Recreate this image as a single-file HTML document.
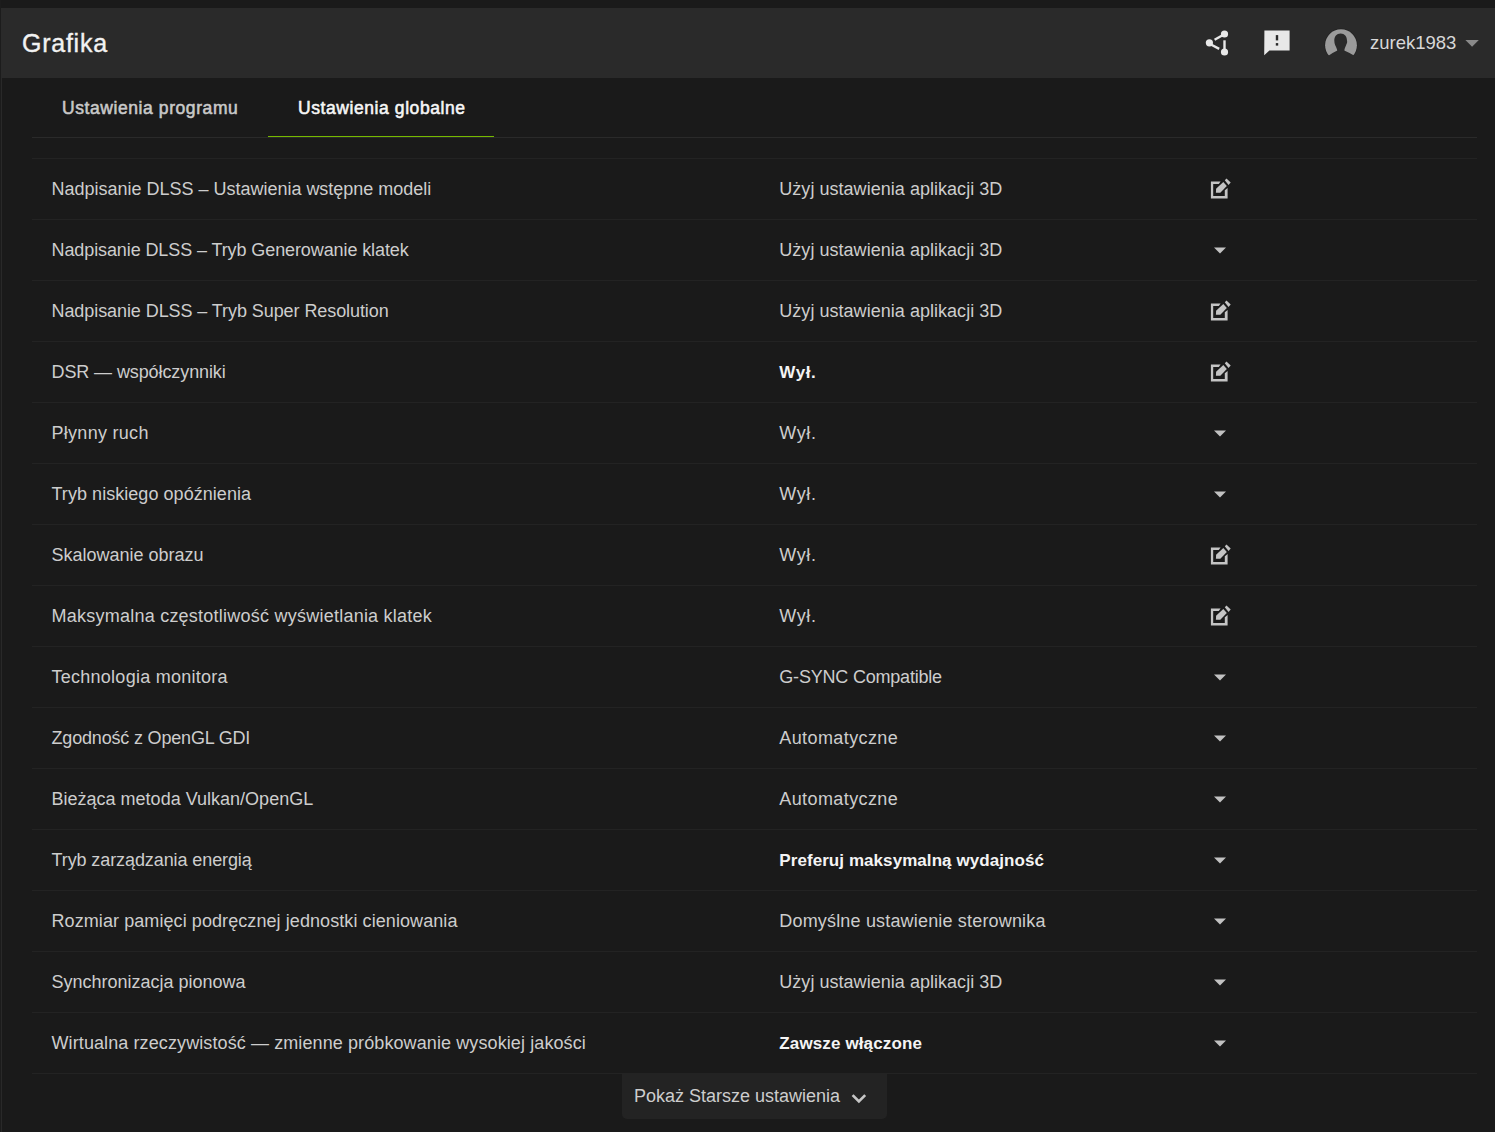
<!DOCTYPE html>
<html><head><meta charset="utf-8">
<style>
html,body{margin:0;padding:0;}
body{width:1495px;height:1132px;overflow:hidden;background:#1a1a1a;position:relative;font-family:"Liberation Sans",sans-serif;}
.abs{position:absolute;}
#top{left:0;top:0;width:1495px;height:8px;background:#1a1a1a;}
#lcol0{left:0;top:0;width:1px;height:1132px;background:#1c1c1c;}
#lcol1{left:1px;top:78px;width:1px;height:1054px;background:#292929;}
#hdr{left:1px;top:8px;width:1494px;height:70px;background:#2a2a2a;}
#title{left:22px;top:27.9px;font-size:25px;letter-spacing:0.75px;font-weight:400;-webkit-text-stroke:0.35px #f2f2f2;color:#f2f2f2;line-height:30px;white-space:nowrap;}
.tab{top:92.6px;font-size:17.5px;font-weight:400;letter-spacing:0.58px;-webkit-text-stroke:0.55px currentColor;line-height:30px;white-space:nowrap;}
.line{left:32px;width:1445px;height:1px;background:#232323;}
.lbl{left:51.5px;font-size:18px;color:#cdcdcd;line-height:61px;white-space:nowrap;}
.val{left:779.3px;font-size:18px;color:#cdcdcd;line-height:61px;white-space:nowrap;}
.val.b{font-weight:700;color:#f4f4f4;font-size:17px;letter-spacing:0.1px;}
.ico{left:1208px;width:24px;height:24px;}
</style></head>
<body>
<div class="abs" id="top"></div>
<div class="abs" id="hdr"></div>
<div class="abs" id="lcol0"></div>
<div class="abs" id="lcol1"></div>
<div class="abs" id="title">Grafika</div>

<!-- header icons -->
<svg class="abs" style="left:1200px;top:24px" width="36" height="38" viewBox="1200 24 36 38">
  <g fill="#e8e8e8" stroke="#e8e8e8">
    <circle cx="1224.5" cy="34" r="3.6" stroke="none"/>
    <circle cx="1209.4" cy="42.8" r="3.6" stroke="none"/>
    <circle cx="1224.5" cy="52" r="3.6" stroke="none"/>
    <line x1="1214.6" y1="39.8" x2="1223" y2="35" stroke-width="2.4"/>
    <line x1="1224.5" y1="40.3" x2="1224.5" y2="50" stroke-width="2.4"/>
    <line x1="1210" y1="44" x2="1219.2" y2="48.9" stroke-width="2.4"/>
  </g>
</svg>
<svg class="abs" style="left:1260px;top:26px" width="34" height="34" viewBox="1260 26 34 34">
  <path fill="#e8e8e8" d="M1264.4 30.4H1289.6V50.5H1269.4L1264.2 55.2Z"/>
  <rect x="1275.8" y="35.1" width="2.4" height="5.3" fill="#2a2a2a"/>
  <rect x="1275.8" y="43.1" width="2.4" height="2.5" fill="#2a2a2a"/>
</svg>
<svg class="abs" style="left:1320px;top:24px" width="42" height="36" viewBox="1320 24 42 36">
  <defs><clipPath id="avc"><path d="M1320 24H1362V55.4H1353.9Q1348.6 52.4 1344.2 50.5H1337.4Q1332.9 52.6 1328.1 55.9H1320Z"/></clipPath></defs>
  <circle cx="1341" cy="45.2" r="16.6" fill="#222" clip-path="url(#avc)"/>
  <circle cx="1341" cy="45.2" r="15.9" fill="#9b9b9b" clip-path="url(#avc)"/>
  <path fill="#2a2a2a" d="M1340.6 33.4C1344.6 33.4 1347 36.4 1347 40.6C1347 41.2 1347.3 41.6 1347.1 42.6C1346.9 43.6 1346.5 44.2 1346 45.4C1345.2 47.2 1344.5 48.2 1344.2 51.5H1337.4C1337.1 48.4 1336 47 1335.2 45.2C1334.6 43.8 1334.3 42.4 1334.3 40.6C1334.3 36.4 1336.6 33.4 1340.6 33.4Z"/>
</svg>
<div class="abs" style="left:1370px;top:27.6px;font-size:18.5px;color:#d8d8d8;line-height:30px;white-space:nowrap;">zurek1983</div>
<svg class="abs" style="left:1464px;top:38px" width="16" height="12" viewBox="1464 38 16 12">
  <path d="M1465.4 39.9H1478.8L1472.1 46.7Z" fill="#8a8a8a"/>
</svg>

<!-- tabs -->
<div class="abs tab" style="left:62px;color:#c9c9c9;">Ustawienia programu</div>
<div class="abs tab" style="left:298px;color:#f6f6f6;">Ustawienia globalne</div>
<div class="abs" style="left:32px;top:137px;width:1445px;height:1px;background:#2a2a2a;"></div>
<div class="abs" style="left:268px;top:136px;width:226px;height:1px;background:#76b900;"></div>

<!--ROWS-->
<div class="abs line" style="top:158px"></div>
<div class="abs lbl" style="top:159px;letter-spacing:-0.009px">Nadpisanie DLSS – Ustawienia wstępne modeli</div>
<div class="abs val" style="top:159px;letter-spacing:0.033px">Użyj ustawienia aplikacji 3D</div>
<svg class="abs" style="left:1206px;top:174px" width="28" height="28" viewBox="0 0 28 28"><g fill="#c4c4c4"><path d="M4.9 7.4H14.6L12.8 10.1H7.2V21.9H18.8V16.3L21.6 13.9V24.4H4.9Z"/><path d="M10.1 14.8L17.3 7.9L20.8 11.9L14.3 18.8H9.9Z"/><path d="M18.8 6.2L20.5 4.5L24.7 8.4L22.5 10.9Z"/></g></svg>
<div class="abs line" style="top:219px"></div>
<div class="abs lbl" style="top:220px;letter-spacing:-0.099px">Nadpisanie DLSS – Tryb Generowanie klatek</div>
<div class="abs val" style="top:220px;letter-spacing:0.033px">Użyj ustawienia aplikacji 3D</div>
<svg class="abs" style="left:1206px;top:235px" width="28" height="28" viewBox="0 0 28 28"><path d="M8 12.4H20L14 18.4Z" fill="#c2c2c2"/></svg>
<div class="abs line" style="top:280px"></div>
<div class="abs lbl" style="top:281px;letter-spacing:-0.078px">Nadpisanie DLSS – Tryb Super Resolution</div>
<div class="abs val" style="top:281px;letter-spacing:0.033px">Użyj ustawienia aplikacji 3D</div>
<svg class="abs" style="left:1206px;top:296px" width="28" height="28" viewBox="0 0 28 28"><g fill="#c4c4c4"><path d="M4.9 7.4H14.6L12.8 10.1H7.2V21.9H18.8V16.3L21.6 13.9V24.4H4.9Z"/><path d="M10.1 14.8L17.3 7.9L20.8 11.9L14.3 18.8H9.9Z"/><path d="M18.8 6.2L20.5 4.5L24.7 8.4L22.5 10.9Z"/></g></svg>
<div class="abs line" style="top:341px"></div>
<div class="abs lbl" style="top:342px;letter-spacing:-0.100px">DSR — współczynniki</div>
<div class="abs val b" style="top:342px;letter-spacing:0.600px">Wył.</div>
<svg class="abs" style="left:1206px;top:357px" width="28" height="28" viewBox="0 0 28 28"><g fill="#c4c4c4"><path d="M4.9 7.4H14.6L12.8 10.1H7.2V21.9H18.8V16.3L21.6 13.9V24.4H4.9Z"/><path d="M10.1 14.8L17.3 7.9L20.8 11.9L14.3 18.8H9.9Z"/><path d="M18.8 6.2L20.5 4.5L24.7 8.4L22.5 10.9Z"/></g></svg>
<div class="abs line" style="top:402px"></div>
<div class="abs lbl" style="top:403px;letter-spacing:0.288px">Płynny ruch</div>
<div class="abs val" style="top:403px;letter-spacing:0.600px">Wył.</div>
<svg class="abs" style="left:1206px;top:418px" width="28" height="28" viewBox="0 0 28 28"><path d="M8 12.4H20L14 18.4Z" fill="#c2c2c2"/></svg>
<div class="abs line" style="top:463px"></div>
<div class="abs lbl" style="top:464px;letter-spacing:0.047px">Tryb niskiego opóźnienia</div>
<div class="abs val" style="top:464px;letter-spacing:0.600px">Wył.</div>
<svg class="abs" style="left:1206px;top:479px" width="28" height="28" viewBox="0 0 28 28"><path d="M8 12.4H20L14 18.4Z" fill="#c2c2c2"/></svg>
<div class="abs line" style="top:524px"></div>
<div class="abs lbl" style="top:525px;letter-spacing:-0.006px">Skalowanie obrazu</div>
<div class="abs val" style="top:525px;letter-spacing:0.600px">Wył.</div>
<svg class="abs" style="left:1206px;top:540px" width="28" height="28" viewBox="0 0 28 28"><g fill="#c4c4c4"><path d="M4.9 7.4H14.6L12.8 10.1H7.2V21.9H18.8V16.3L21.6 13.9V24.4H4.9Z"/><path d="M10.1 14.8L17.3 7.9L20.8 11.9L14.3 18.8H9.9Z"/><path d="M18.8 6.2L20.5 4.5L24.7 8.4L22.5 10.9Z"/></g></svg>
<div class="abs line" style="top:585px"></div>
<div class="abs lbl" style="top:586px;letter-spacing:0.237px">Maksymalna częstotliwość wyświetlania klatek</div>
<div class="abs val" style="top:586px;letter-spacing:0.600px">Wył.</div>
<svg class="abs" style="left:1206px;top:601px" width="28" height="28" viewBox="0 0 28 28"><g fill="#c4c4c4"><path d="M4.9 7.4H14.6L12.8 10.1H7.2V21.9H18.8V16.3L21.6 13.9V24.4H4.9Z"/><path d="M10.1 14.8L17.3 7.9L20.8 11.9L14.3 18.8H9.9Z"/><path d="M18.8 6.2L20.5 4.5L24.7 8.4L22.5 10.9Z"/></g></svg>
<div class="abs line" style="top:646px"></div>
<div class="abs lbl" style="top:647px;letter-spacing:0.261px">Technologia monitora</div>
<div class="abs val" style="top:647px;letter-spacing:-0.203px">G-SYNC Compatible</div>
<svg class="abs" style="left:1206px;top:662px" width="28" height="28" viewBox="0 0 28 28"><path d="M8 12.4H20L14 18.4Z" fill="#c2c2c2"/></svg>
<div class="abs line" style="top:707px"></div>
<div class="abs lbl" style="top:708px;letter-spacing:-0.180px">Zgodność z OpenGL GDI</div>
<div class="abs val" style="top:708px;letter-spacing:0.401px">Automatyczne</div>
<svg class="abs" style="left:1206px;top:723px" width="28" height="28" viewBox="0 0 28 28"><path d="M8 12.4H20L14 18.4Z" fill="#c2c2c2"/></svg>
<div class="abs line" style="top:768px"></div>
<div class="abs lbl" style="top:769px;letter-spacing:0.007px">Bieżąca metoda Vulkan/OpenGL</div>
<div class="abs val" style="top:769px;letter-spacing:0.401px">Automatyczne</div>
<svg class="abs" style="left:1206px;top:784px" width="28" height="28" viewBox="0 0 28 28"><path d="M8 12.4H20L14 18.4Z" fill="#c2c2c2"/></svg>
<div class="abs line" style="top:829px"></div>
<div class="abs lbl" style="top:830px;letter-spacing:-0.094px">Tryb zarządzania energią</div>
<div class="abs val b" style="top:830px;letter-spacing:0.068px">Preferuj maksymalną wydajność</div>
<svg class="abs" style="left:1206px;top:845px" width="28" height="28" viewBox="0 0 28 28"><path d="M8 12.4H20L14 18.4Z" fill="#c2c2c2"/></svg>
<div class="abs line" style="top:890px"></div>
<div class="abs lbl" style="top:891px;letter-spacing:0.079px">Rozmiar pamięci podręcznej jednostki cieniowania</div>
<div class="abs val" style="top:891px;letter-spacing:0.174px">Domyślne ustawienie sterownika</div>
<svg class="abs" style="left:1206px;top:906px" width="28" height="28" viewBox="0 0 28 28"><path d="M8 12.4H20L14 18.4Z" fill="#c2c2c2"/></svg>
<div class="abs line" style="top:951px"></div>
<div class="abs lbl" style="top:952px;letter-spacing:0.000px">Synchronizacja pionowa</div>
<div class="abs val" style="top:952px;letter-spacing:0.033px">Użyj ustawienia aplikacji 3D</div>
<svg class="abs" style="left:1206px;top:967px" width="28" height="28" viewBox="0 0 28 28"><path d="M8 12.4H20L14 18.4Z" fill="#c2c2c2"/></svg>
<div class="abs line" style="top:1012px"></div>
<div class="abs lbl" style="top:1013px;letter-spacing:0.100px">Wirtualna rzeczywistość — zmienne próbkowanie wysokiej jakości</div>
<div class="abs val b" style="top:1013px;letter-spacing:0.129px">Zawsze włączone</div>
<svg class="abs" style="left:1206px;top:1028px" width="28" height="28" viewBox="0 0 28 28"><path d="M8 12.4H20L14 18.4Z" fill="#c2c2c2"/></svg>
<div class="abs line" style="top:1073px"></div>
<div class="abs" style="left:622px;top:1074px;width:265px;height:45px;background:#232323;border-radius:0 0 5px 5px;"></div>
<div class="abs" style="left:634px;top:1081px;font-size:18px;color:#cdcdcd;line-height:30px;white-space:nowrap;">Pokaż Starsze ustawienia</div>
<svg class="abs" style="left:848px;top:1088px" width="22" height="20" viewBox="848 1088 22 20"><path d="M852.6 1095.1L858.9 1101.4L865.2 1095.1" fill="none" stroke="#c6c6c6" stroke-width="2.7"/></svg>
<!--/ROWS-->
</body></html>
